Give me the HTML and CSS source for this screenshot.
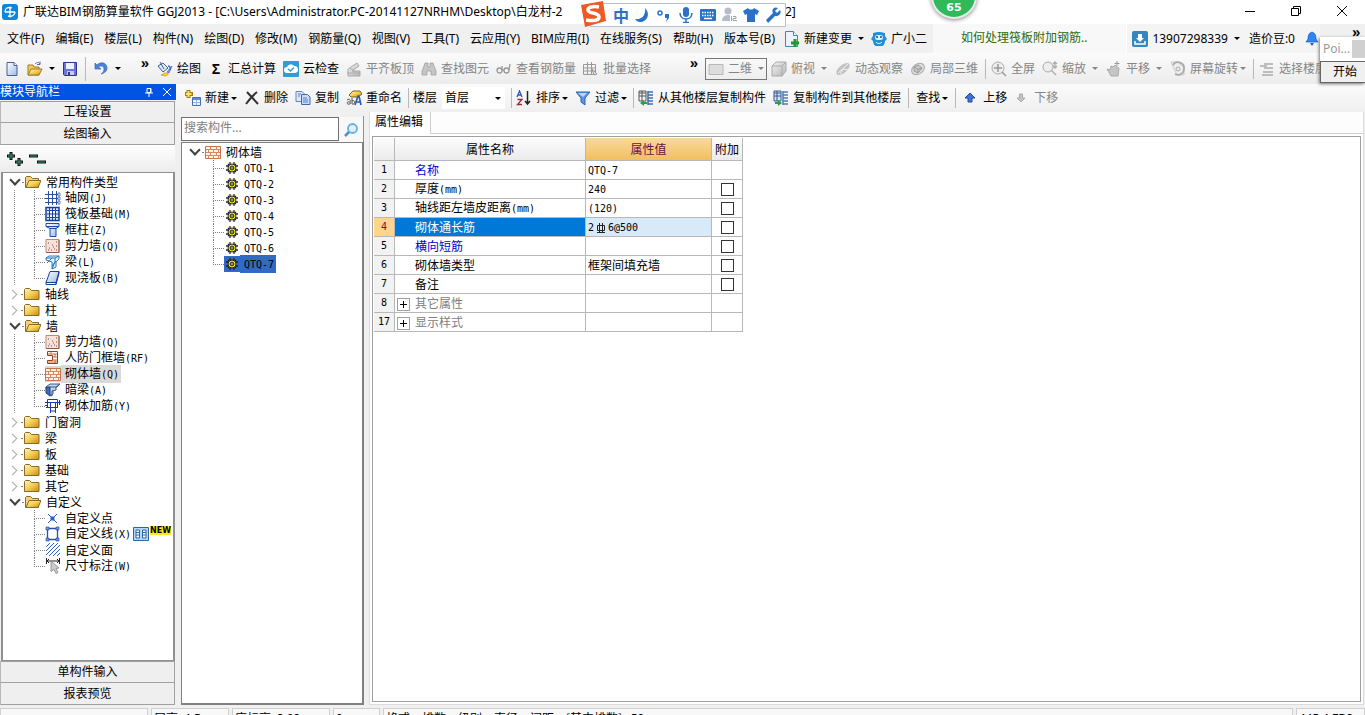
FILE: index.html
```html
<!DOCTYPE html>
<html lang="zh-CN">
<head>
<meta charset="utf-8">
<title>广联达BIM钢筋算量软件 GGJ2013</title>
<link rel="stylesheet" href="styles.css">
</head>
<body>
<svg class="defs" aria-hidden="true">
  <defs>
    <linearGradient id="gold" x1="0" y1="0" x2="1" y2="1"><stop offset="0" stop-color="#fff6b8"/><stop offset=".5" stop-color="#f5cd55"/><stop offset="1" stop-color="#c98a10"/></linearGradient>
    <linearGradient id="steel" x1="0" y1="0" x2="1" y2="1"><stop offset="0" stop-color="#fff"/><stop offset="1" stop-color="#9dbbe8"/></linearGradient>
    <linearGradient id="ash" x1="0" y1="0" x2="1" y2="1"><stop offset="0" stop-color="#f4f4f4"/><stop offset="1" stop-color="#b4b4b4"/></linearGradient>
  </defs>
  <symbol id="i-doc" viewBox="0 0 16 16"><path d="M3 1.500h7l3 3v10H3z" fill="url(#steel)" stroke="#4a5f8c"/><path d="M10 1.500v3h3" fill="#fff" stroke="#4a5f8c"/></symbol>
  <symbol id="i-open" viewBox="0 0 16 16"><path d="M1 14V4h5l1 2h5v8z" fill="#f0c860" stroke="#a07a20"/><path d="M1 14l3-6h11l-3 6z" fill="url(#gold)" stroke="#a07a20"/><path d="M8 3c2-2 4-2 5 0m0-2.500v3h-3" fill="none" stroke="#4d6ea8"/></symbol>
  <symbol id="i-save" viewBox="0 0 16 16"><path d="M1.500 1.500h13v13h-12l-1-1z" fill="#6b74d8" stroke="#30358c"/><path d="M4 2h8v6H4z" fill="#eef2ff"/><path d="M5 10h7v4H5z" fill="#c4c9f0"/><path d="M6 11h2v3H6z" fill="#30358c"/></symbol>
  <symbol id="i-undo" viewBox="0 0 16 16"><path d="M2 2v6h6L5.500 6C8 4 11 5 11 8c0 2-1 4-3 5 4-1 6-3 6-6 0-5-6-7-10-3z" fill="#4e84dc" stroke="#2e5cb0" stroke-width=".6"/></symbol>
  <symbol id="i-draw" viewBox="0 0 16 16"><path d="M1 5l5-3 5 5-5 4z" fill="#dfe9f8" stroke="#44608f"/><path d="M3 1l4 7" stroke="#44608f"/><path d="M15 5l-5 6 2 1z" fill="#7ca0df" stroke="#3b5aa0" stroke-width=".6"/><path d="M4 14c3-1 4-3 6-2 3 1 0 3-2 3z" fill="#ffd22e" stroke="#b48a10" stroke-width=".6"/><path d="M11 5c2 0 3 2 2 4" stroke="#3167c9" stroke-width="1.500" fill="none"/></symbol>
  <symbol id="i-cloud" viewBox="0 0 16 16"><rect width="16" height="16" rx="1" fill="#2d9fd6"/><path d="M4 12a3 3 0 010-6 4 4 0 017-1 3.500 3.500 0 011 7z" fill="#fff"/><path d="M5 8l2.500 2L11 6.500" fill="none" stroke="#2d9fd6" stroke-width="1.500"/></symbol>
  <symbol id="i-flat" viewBox="0 0 16 16"><path d="M2 8l9-6 2 3-7 5h8v5H2z" fill="url(#ash)" stroke="#aaa"/><path d="M1 12h13M4 7l5 4" stroke="#aaa"/></symbol>
  <symbol id="i-bino" viewBox="0 0 16 16"><path d="M4 2h3v4h2V2h3l1 3 2 5v4h-5v-4H6v4H1v-4l2-5z" fill="#c5c5c5" stroke="#999" stroke-width=".7"/></symbol>
  <symbol id="i-glass" viewBox="0 0 16 16"><g fill="none" stroke="#999" stroke-width="1.300"><circle cx="3.500" cy="9.500" r="2.500"/><circle cx="10.500" cy="9.500" r="2.500"/><path d="M6 9h2M6 8V5M13 9l1-6"/></g></symbol>
  <symbol id="i-batch" viewBox="0 0 16 16"><g fill="none" stroke="#999"><path d="M.500 3.500h12v10H.500zM.500 7h12M.500 10h12M4.500 1v13M8.500 1v13"/><path d="M9 8l5 5-3 1z" fill="#ddd"/></g></symbol>
  <symbol id="i-rect" viewBox="0 0 16 16"><path d="M1 3.500h14v10H1z" fill="#ddd" stroke="#b8b8b8"/></symbol>
  <symbol id="i-cube" viewBox="0 0 16 16"><path d="M1 5l4-4h10v9l-4 5H1z" fill="url(#ash)" stroke="#aaa"/><path d="M1 5h10v10M11 5l4-4" fill="none" stroke="#aaa"/></symbol>
  <symbol id="i-orbit" viewBox="0 0 16 16"><ellipse cx="8" cy="8" rx="4" ry="8" transform="rotate(50 8 8)" fill="#c2c2c2"/><path d="M3 12L13 3M5 13l3-5 5 1" stroke="#f3f3f3" fill="none"/></symbol>
  <symbol id="i-orbit2" viewBox="0 0 16 16"><ellipse cx="8" cy="8" rx="7" ry="5" transform="rotate(-35 8 8)" fill="#ddd" stroke="#aaa"/><path d="M4 6l4-2 4 3-4 5-4-2zM4 6l4 2 4-1M8 8v4" fill="#c8c8c8" stroke="#999"/></symbol>
  <symbol id="i-full" viewBox="0 0 16 16"><circle cx="7" cy="7" r="6" fill="#eee" stroke="#aaa"/><path d="M7 3v8M3 7h8M11 11l4 4" stroke="#999" stroke-width="1.500"/></symbol>
  <symbol id="i-zoom" viewBox="0 0 16 16"><circle cx="6" cy="6" r="5" fill="#eee" stroke="#aaa"/><path d="M9 9l5 5M13 1v6M11 3l2-2 2 2M11 5l2 2 2-2" stroke="#aaa" stroke-width="1.300" fill="none"/></symbol>
  <symbol id="i-pan" viewBox="0 0 16 16"><path d="M1 8l3 1 1-4 2 1 2-2 2 2 2 1-1 8H5z" fill="#c5c5c5" stroke="#aaa"/><path d="M11 0v5M8.500 2.500h5" stroke="#999"/></symbol>
  <symbol id="i-rotate" viewBox="0 0 16 16"><path d="M1 1h7l6 6v7H7z" fill="#eee" stroke="#ccc"/><path d="M3 4a6 6 0 0111 4 6 6 0 01-9 5" fill="none" stroke="#aaa" stroke-width="1.800"/><circle cx="8" cy="8" r="2" fill="none" stroke="#aaa"/></symbol>
  <symbol id="i-floors" viewBox="0 0 16 16"><path d="M5 3h9M5 7h9M4 11h10M3 14h11M1 5h7" stroke="#aaa" stroke-width="1.500"/></symbol>
  <symbol id="i-new" viewBox="0 0 16 16"><path d="M3.500 0v8M0 4h8" stroke="#a87a10" stroke-width="4"/><path d="M3.500 1v6M1 4h5.500" stroke="#ffe45c" stroke-width="2"/><path d="M7.500 7.500h8v8h-8z" fill="#eaf2ff" stroke="#4a6fae"/><path d="M8 8h7v2H8z" fill="#5b8ad8"/><path d="M8 12.500h7M11.500 10v5" stroke="#9db8e0"/></symbol>
  <symbol id="i-x" viewBox="0 0 16 16"><path d="M3 2l11 12M13 2C8 6 5 10 2 14" stroke="#333" stroke-width="2" fill="none"/></symbol>
  <symbol id="i-copy" viewBox="0 0 16 16"><path d="M1 1.500h6l2 2v8H1z" fill="#dbe7fb" stroke="#6286c0"/><path d="M6.500 4.500h6l2.500 2.500v7.500H6.500z" fill="#c8dbfa" stroke="#3f69b0"/><path d="M3 4h3M3 6h2M8 8h4M8 10h5M8 12h5" stroke="#5b80c0"/></symbol>
  <symbol id="i-ren" viewBox="0 0 16 16"><path d="M3 5l4-4h7l2 3-4 3H5z" fill="url(#gold)" stroke="#80611c"/><path d="M9 15l3-9h1l2 9M10 12h4" fill="none" stroke="#2f5eb8" stroke-width="1.700"/><path d="M1 10c3-2 4 0 3 4M4 12c-4-1-4 3 0 2M6 8v6c4 1 3-5 0-3" fill="none" stroke="#555"/></symbol>
  <symbol id="i-sort" viewBox="0 0 16 16"><path d="M1 7l2.500-6L6 7M2 5h3" fill="none" stroke="#2f58b8" stroke-width="1.300"/><path d="M1.500 9.500H6l-4.500 5H6" fill="none" stroke="#a12835" stroke-width="1.300"/><path d="M11.500 1v12M9 11l2.500 3L14 11" fill="none" stroke="#222" stroke-width="1.500"/></symbol>
  <symbol id="i-filter" viewBox="0 0 16 16"><path d="M1 2h14l-5 6v7l-4-3V8z" fill="#5a96e6" stroke="#2c62b0"/><path d="M3 3h9L8 7" fill="#b8d6ff"/></symbol>
  <symbol id="i-from" viewBox="0 0 16 16"><path d="M1 1h7v10H1zM1 3h7M1 6h7M4 1v10" fill="#f4f4f4" stroke="#555"/><path d="M10 2h5M10 5h5M10 8h5M10 11h5M10 14h5M10 1v14" stroke="#3a6fb8" stroke-width="1.500"/><path d="M2 13l4-3v2h3v2H6v2z" fill="#27a04a"/></symbol>
  <symbol id="i-to" viewBox="0 0 16 16"><path d="M1 1h7v10H1zM1 3h7M1 6h7M4 1v10" fill="#d7e3f6" stroke="#35588c"/><path d="M10 2h5M10 5h5M10 8h5M10 11h5M10 14h5M10 1v14" stroke="#4c7fb8" stroke-width="1.500"/><path d="M9 13l-4-3v2H2v2h3v2z" fill="#27a04a"/></symbol>
  <symbol id="i-up" viewBox="0 0 16 16"><path d="M7 3l5 5H9v4H5V8H2z" fill="#3f74e0" stroke="#2047a0"/></symbol>
  <symbol id="i-down" viewBox="0 0 16 16"><path d="M7 12l4-4H8.500V4h-3v4H3z" fill="#c4c4c4" stroke="#aaa"/></symbol>
  <symbol id="i-docplus" viewBox="0 0 16 16"><path d="M1.500 .500h8l4 4v11h-12z" fill="#eaf4ff" stroke="#4d7fb4"/><path d="M9.500 .500v4h4" fill="#fff" stroke="#4d7fb4"/><path d="M11 8v8M7 12h8" stroke="#1f9a2c" stroke-width="3"/></symbol>
  <symbol id="i-pet" viewBox="0 0 16 16"><path d="M2 2c2 0 2-1 6-1s4 1 6 1v3l2 3-2 2c0 3-2 5-3 5H5c-1 0-3-2-3-5L0 8l2-3z" fill="#2090dc"/><rect x="4" y="4" width="8" height="5" rx="2.500" fill="#d8f0ff"/><path d="M6 5v2M10 5v2" stroke="#124c80" stroke-width="1.500"/><path d="M5 11c2 2 4 2 6 0" stroke="#fff" fill="none"/></symbol>
  <symbol id="i-user" viewBox="0 0 16 16"><rect width="16" height="16" rx="2" fill="#3587bd"/><path d="M6 3h4v4h2l-4 4-4-4h2z" fill="#fff"/><path d="M3 10v3h10v-3" fill="none" stroke="#fff" stroke-width="1.500"/></symbol>
  <symbol id="i-bell" viewBox="0 0 16 16"><path d="M8 1c3 1 4 3 4 7l2 3H2l2-3c0-4 1-6 4-7z" fill="#2f86f2" stroke="#1c5dc0" stroke-width=".7"/><path d="M6 12h4l-2 3z" fill="#1c5dc0"/></symbol>
  <symbol id="i-folder" viewBox="0 0 16 16"><path d="M.500 13.500v-10l1-1h4l2 2h7.500v9z" fill="url(#gold)" stroke="#8b6a24"/></symbol>
  <symbol id="i-fopen" viewBox="0 0 16 16"><path d="M.500 13.500v-10l1-1h4l2 2h6v9z" fill="#f3d27a" stroke="#8b6a24"/><path d="M1 13.500l3-7h12l-3 7z" fill="url(#gold)" stroke="#8b6a24"/></symbol>
  <symbol id="i-grid" viewBox="0 0 16 16"><path d="M0 4.500h13M0 8.500h13M0 12.500h13M3.500 1v14M7.500 1v14M11.500 1v14" stroke="#2a4fa8"/><path d="M13 3h2v3h-2zM13 7h2v3h-2zM13 11h2v3h-2z" fill="none" stroke="#2a4fa8" stroke-width=".7"/></symbol>
  <symbol id="i-raft" viewBox="0 0 16 16"><path d="M1 1.500h13v13H1z" fill="#dbe8fb" stroke="#153f9c" stroke-width="1.500"/><path d="M4.500 4.500h6v7h-6z" fill="#fff" stroke="#153f9c"/><path d="M7.500 2v12M2 8h12M2 4.500h2M2 11.500h2M11 4.500h3M11 11.500h3M4.500 2v2M10.500 2v2M4.500 12v2M10.500 12v2" fill="none" stroke="#153f9c"/></symbol>
  <symbol id="i-col" viewBox="0 0 16 16"><path d="M1 1.500h13v3l-3 2v8H5v-8l-4-2z" fill="url(#steel)" stroke="#1d4b9e"/><path d="M1 4.500h13M5 6.500h6" stroke="#1d4b9e"/></symbol>
  <symbol id="i-shear" viewBox="0 0 16 16"><path d="M1 1.500h13v13H1z" fill="#f6e2d8" stroke="#c18a70"/><path d="M14 2v12.500H1" fill="none" stroke="#8a5a48"/><path d="M3 5h1M7 7h1M4 10h1M9 11h1M11 8h1M6 12h1M11 4h1M3 12h1M8 9h1M11 12h1" stroke="#844"/></symbol>
  <symbol id="i-beam" viewBox="0 0 16 16"><path d="M1 4l3-2h10v3l-3 3v5l-4 2V8L1 6z" fill="#e4f2fd" stroke="#2a78b8"/><path d="M1 4h9v4l-3 7M10 4l4-2M2 9l5-5M7 12l4-5" fill="none" stroke="#2a78b8"/></symbol>
  <symbol id="i-slab" viewBox="0 0 16 16"><path d="M5 1.500h9l-3 11H1z" fill="url(#steel)" stroke="#12409a"/><path d="M1 12.500v2h10l3-11v-2M11 12.500v2" fill="none" stroke="#12409a"/></symbol>
  <symbol id="i-door" viewBox="0 0 16 16"><path d="M2.500 1.500h10v12h-10v-3h5v-5h-5z" fill="#fff" stroke="#9b3d18"/><path d="M3 4h9M8 7h4M8 10h4M3 12h9M6 2v2M10 4v3M10 10v3" stroke="#c9683c"/></symbol>
  <symbol id="i-brick" viewBox="0 0 16 16"><path d="M.500 2.500h15v12H.500z" fill="#fff3e6" stroke="#c77448"/><path d="M1 5.500h14M1 8.500h14M1 11.500h14M5.500 3v2.500M11.500 3v2.500M8.500 5.500v3M3.500 5.500v3M13.500 5.500v3M5.500 8.500v3M11.500 8.500v3M8.500 11.500v3M3.500 11.500v3M13.500 11.500v3" stroke="#d5895c"/></symbol>
  <symbol id="i-hbeam" viewBox="0 0 16 16"><path d="M1 5l4-3h10l-4 3v3l-4 1v5l-5-3z" fill="#cbd7e8" stroke="#345a92"/><path d="M1 5h4v9l-4-3z" fill="#3f6cb0" stroke="#1d3f78"/><path d="M5 5h7l3-3M5 14l3-2V8" fill="none" stroke="#345a92"/></symbol>
  <symbol id="i-rebar" viewBox="0 0 16 16"><path d="M2.500 1.500h10v8h-10zM0 4.500h16M14.500 2v5M5.500 5v10M10.500 5v10M1 9.500h12M6 13h5M0 7.500h3" fill="none" stroke="#1638b0"/></symbol>
  <symbol id="i-pt" viewBox="0 0 16 16"><path d="M3 4l9 9M12 4l-9 9" stroke="#2d62b8"/><path d="M5.500 6.500h4v4h-4z" fill="#2d62b8"/></symbol>
  <symbol id="i-line" viewBox="0 0 16 16"><path d="M2.500 2.500h10v11h-10z" fill="none" stroke="#2d4fae" stroke-width="1.300"/><path d="M1 1h3v3H1zM11 1h3v3h-3zM1 12h3v3H1zM11 12h3v3h-3z" fill="#6b9bea" stroke="#1d3f98" stroke-width=".6"/></symbol>
  <symbol id="i-area" viewBox="0 0 16 16"><path d="M1 5l4-4M1 9l8-8M1 13L13 1M4 14L15 3M8 14l7-7M12 14l3-3" stroke="#2d5fb4"/></symbol>
  <symbol id="i-dim" viewBox="0 0 16 16"><path d="M1.500 0v6M14.500 0v6M2 3h12M4 1L2 3l2 2M12 1l2 2-2 2" stroke="#222" fill="none"/><path d="M6 3l8 7-3 .500 2 4-2 1-2-4-3 2z" fill="#ccc" stroke="#888" stroke-width=".8"/></symbol>
  <symbol id="i-book" viewBox="0 0 16 16"><path d="M.500 1.500h15v13H.500z" fill="#b6d8f6" stroke="#2a66a8"/><path d="M3 4h3.500v8H3zM9.500 4H13v8H9.500zM3 6.500h3.500M3 9h3.500M9.500 6.500H13M9.500 9H13" fill="#fff" stroke="#2a66a8"/></symbol>
  <symbol id="i-gear" viewBox="0 0 12 12"><path d="M4 0v12M8 0v12M0 4h12M0 8h12M2 2l8 8M10 2l-8 8" stroke="#222" stroke-width="1.300"/><circle cx="6" cy="6" r="4" fill="#ffee22" stroke="#222"/><path d="M4.500 4.500h3v3h-3z" fill="none" stroke="#333"/><path d="M6 2v8M2 6h8" stroke="#555" stroke-width=".6"/></symbol>
  <symbol id="i-plus2" viewBox="0 0 18 16"><path d="M5 1v8M1 5h8M13 7v8M9 11h8" stroke="#111" stroke-width="3"/><path d="M5 2v6M2 5h6M13 8v6M10 11h6" stroke="#35a07c"/></symbol>
  <symbol id="i-minus2" viewBox="0 0 18 16"><path d="M0 5h9M8 11h9" stroke="#111" stroke-width="3"/><path d="M1 5h7M9 11h7" stroke="#35a07c"/></symbol>
  <symbol id="i-find" viewBox="0 0 16 16"><circle cx="9.500" cy="6.500" r="4.500" fill="#dff0fc" stroke="#6aaede" stroke-width="1.800"/><path d="M6 10l-4 4" stroke="#4b90cc" stroke-width="2.500"/></symbol>
</svg>

<div class="app">
  <header class="titlebar">
    <svg class="logo" viewBox="0 0 16 16"><rect width="16" height="16" rx="3" fill="#0e86dc"/><path d="M8 2.500v11M3 8h10M10 4a5 4.500 0 00-5 0c-2 1-2 3-2 4M6 12c4 1 7-1 7-4" fill="none" stroke="#fff" stroke-width="1.300"/></svg>
    <h1 class="caption">广联达BIM钢筋算量软件 GGJ2013 - [C:\Users\Administrator.PC-20141127NRHM\Desktop\白龙村-2</h1>
    <span class="caption-end">2]</span>
    <div class="winbtns">
      <button aria-label="最小化"><svg viewBox="0 0 12 12"><path d="M1 6.500h10" stroke="#000"/></svg></button>
      <button aria-label="还原"><svg viewBox="0 0 12 12"><path d="M1.500 3.500h7v7h-7zM3.500 3.500v-2h7v7h-2" fill="none" stroke="#000"/></svg></button>
      <button aria-label="关闭"><svg viewBox="0 0 12 12"><path d="M1 1l10 10M11 1L1 11" stroke="#000"/></svg></button>
    </div>
  </header>

  <div class="menubar">
    <nav class="menus">
      <button>文件(F)</button><button>编辑(E)</button><button>楼层(L)</button><button>构件(N)</button><button>绘图(D)</button><button>修改(M)</button><button>钢筋量(Q)</button><button>视图(V)</button><button>工具(T)</button><button>云应用(Y)</button><button>BIM应用(I)</button><button>在线服务(S)</button><button>帮助(H)</button><button>版本号(B)</button>
    </nav>
    <button class="tool"><svg><use href="#i-docplus"/></svg>新建变更<i class="caret wide"></i></button>
    <button class="tool"><svg><use href="#i-pet"/></svg>广小二</button>
    <div class="tip"><a href="#tip">如何处理筏板附加钢筋..</a></div>
    <div class="account">
      <button class="tool phone"><svg><use href="#i-user"/></svg>13907298339<i class="caret"></i></button>
      <span>造价豆:0</span>
      <button class="tool" aria-label="通知"><svg><use href="#i-bell"/></svg></button>
    </div>
    <span class="more top">»</span>
  </div>

  <div class="toolbar">
    <div class="strip files">
      <button class="tool" aria-label="新建"><svg><use href="#i-doc"/></svg></button>
      <button class="tool" aria-label="打开"><svg><use href="#i-open"/></svg><i class="caret wide"></i></button>
      <button class="tool" aria-label="保存"><svg><use href="#i-save"/></svg></button>
      <i class="sep"></i>
      <button class="tool" aria-label="撤销"><svg><use href="#i-undo"/></svg><i class="caret wide"></i></button>
      <span class="more">»</span>
    </div>
    <div class="strip work">
      <button class="tool"><svg><use href="#i-draw"/></svg>绘图</button>
      <button class="tool"><b class="sigma">Σ</b>汇总计算</button>
      <button class="tool"><svg><use href="#i-cloud"/></svg>云检查</button>
      <button class="tool off"><svg><use href="#i-flat"/></svg>平齐板顶</button>
      <button class="tool off"><svg><use href="#i-bino"/></svg>查找图元</button>
      <button class="tool off"><svg><use href="#i-glass"/></svg>查看钢筋量</button>
      <button class="tool off"><svg><use href="#i-batch"/></svg>批量选择</button>
      <span class="more">»</span>
    </div>
    <div class="strip view">
      <button class="tool off boxed"><svg><use href="#i-rect"/></svg>二维<i class="caret wide"></i></button>
      <button class="tool off"><svg><use href="#i-cube"/></svg>俯视<i class="caret wide"></i></button>
      <button class="tool off"><svg><use href="#i-orbit"/></svg>动态观察</button>
      <button class="tool off"><svg><use href="#i-orbit2"/></svg>局部三维</button>
      <i class="sep"></i>
      <button class="tool off"><svg><use href="#i-full"/></svg>全屏</button>
      <button class="tool off"><svg><use href="#i-zoom"/></svg>缩放<i class="caret wide"></i></button>
      <button class="tool off"><svg><use href="#i-pan"/></svg>平移<i class="caret wide"></i></button>
      <button class="tool off"><svg><use href="#i-rotate"/></svg>屏幕旋转<i class="caret"></i></button>
      <i class="sep"></i>
      <button class="tool off"><svg><use href="#i-floors"/></svg>选择楼层</button>
    </div>
  </div>

  <div class="main">
    <aside class="dock">
      <div class="dock-title"><span>模块导航栏</span>
        <button aria-label="固定"><svg viewBox="0 0 10 10"><path d="M3 1.500h4v4H3zM6.500 1v5M1 6h8M5 6v4" fill="none" stroke="#fff"/></svg></button>
        <button aria-label="关闭"><svg viewBox="0 0 10 10"><path d="M1 1l8 8M9 1L1 9" stroke="#fff"/></svg></button>
      </div>
      <button class="bar first">工程设置</button>
      <button class="bar">绘图输入</button>
      <div class="dock-tools">
        <button aria-label="全部展开"><svg><use href="#i-plus2"/></svg></button>
        <button aria-label="全部折叠"><svg><use href="#i-minus2"/></svg></button>
      </div>
      <ul class="tree nav-tree">
        <li><div class="node open"><svg><use href="#i-fopen"/></svg>常用构件类型</div>
          <ul class="through">
            <li><svg><use href="#i-grid"/></svg><span>轴网<s>(J)</s></span></li>
            <li><svg><use href="#i-raft"/></svg><span>筏板基础<s>(M)</s></span></li>
            <li><svg><use href="#i-col"/></svg><span>框柱<s>(Z)</s></span></li>
            <li><svg><use href="#i-shear"/></svg><span>剪力墙<s>(Q)</s></span></li>
            <li><svg><use href="#i-beam"/></svg><span>梁<s>(L)</s></span></li>
            <li><svg><use href="#i-slab"/></svg><span>现浇板<s>(B)</s></span></li>
          </ul></li>
        <li><div class="node"><svg><use href="#i-folder"/></svg>轴线</div></li>
        <li><div class="node"><svg><use href="#i-folder"/></svg>柱</div></li>
        <li><div class="node open"><svg><use href="#i-fopen"/></svg>墙</div>
          <ul class="through">
            <li><svg><use href="#i-shear"/></svg><span>剪力墙<s>(Q)</s></span></li>
            <li><svg><use href="#i-door"/></svg><span>人防门框墙<s>(RF)</s></span></li>
            <li class="current"><svg><use href="#i-brick"/></svg><span>砌体墙<s>(Q)</s></span></li>
            <li><svg><use href="#i-hbeam"/></svg><span>暗梁<s>(A)</s></span></li>
            <li><svg><use href="#i-rebar"/></svg><span>砌体加筋<s>(Y)</s></span></li>
          </ul></li>
        <li><div class="node"><svg><use href="#i-folder"/></svg>门窗洞</div></li>
        <li><div class="node"><svg><use href="#i-folder"/></svg>梁</div></li>
        <li><div class="node"><svg><use href="#i-folder"/></svg>板</div></li>
        <li><div class="node"><svg><use href="#i-folder"/></svg>基础</div></li>
        <li><div class="node"><svg><use href="#i-folder"/></svg>其它</div></li>
        <li><div class="node open"><svg><use href="#i-fopen"/></svg>自定义</div>
          <ul>
            <li><svg><use href="#i-pt"/></svg><span>自定义点</span></li>
            <li><svg><use href="#i-line"/></svg><span>自定义线<s>(X)</s></span><svg class="book"><use href="#i-book"/></svg><em>NEW</em></li>
            <li><svg><use href="#i-area"/></svg><span>自定义面</span></li>
            <li><svg><use href="#i-dim"/></svg><span>尺寸标注<s>(W)</s></span></li>
          </ul></li>
      </ul>
      <button class="bar first">单构件输入</button>
      <button class="bar">报表预览</button>
    </aside>

    <section class="work-area">
      <div class="strip edit">
        <button class="tool"><svg><use href="#i-new"/></svg>新建<i class="caret"></i></button>
        <button class="tool"><svg><use href="#i-x"/></svg>删除</button>
        <button class="tool"><svg><use href="#i-copy"/></svg>复制</button>
        <button class="tool"><svg><use href="#i-ren"/></svg>重命名</button>
        <i class="sep tight"></i>
        <label for="floor">楼层</label>
        <span class="pick"><select id="floor"><option>首层</option></select><i class="caret"></i></span>
        <i class="sep tight"></i>
        <button class="tool"><svg><use href="#i-sort"/></svg>排序<i class="caret"></i></button>
        <button class="tool"><svg><use href="#i-filter"/></svg>过滤<i class="caret"></i></button>
        <i class="sep tight"></i>
        <button class="tool"><svg><use href="#i-from"/></svg>从其他楼层复制构件</button>
        <button class="tool"><svg><use href="#i-to"/></svg>复制构件到其他楼层</button>
        <i class="sep"></i>
        <button class="tool">查找<i class="caret"></i></button>
        <i class="sep"></i>
        <button class="tool"><svg><use href="#i-up"/></svg>上移</button>
        <button class="tool off"><svg><use href="#i-down"/></svg>下移</button>
      </div>
      <div class="panes">
        <div class="members">
          <div class="search"><input type="text" placeholder="搜索构件..." aria-label="搜索构件"><button aria-label="搜索"><svg><use href="#i-find"/></svg></button></div>
          <ul class="tree member-tree">
            <li><div class="node open"><svg><use href="#i-brick"/></svg>砌体墙</div>
              <ul>
                <li><svg><use href="#i-gear"/></svg><span><s>QTQ-1</s></span></li>
                <li><svg><use href="#i-gear"/></svg><span><s>QTQ-2</s></span></li>
                <li><svg><use href="#i-gear"/></svg><span><s>QTQ-3</s></span></li>
                <li><svg><use href="#i-gear"/></svg><span><s>QTQ-4</s></span></li>
                <li><svg><use href="#i-gear"/></svg><span><s>QTQ-5</s></span></li>
                <li><svg><use href="#i-gear"/></svg><span><s>QTQ-6</s></span></li>
                <li class="picked"><svg><use href="#i-gear"/></svg><span><s>QTQ-7</s></span></li>
              </ul></li>
          </ul>
        </div>
        <div class="props">
          <div class="tabs"><button class="tab">属性编辑</button></div>
          <div class="sheet">
            <table>
              <colgroup><col class="c-no"><col class="c-name"><col class="c-val"><col class="c-add"></colgroup>
              <thead><tr><th></th><th>属性名称</th><th class="hot">属性值</th><th>附加</th></tr></thead>
              <tbody>
                <tr><th>1</th><td class="key blue">名称</td><td><s>QTQ-7</s></td><td></td></tr>
                <tr><th>2</th><td class="key">厚度<s>(mm)</s></td><td><s>240</s></td><td><input type="checkbox" aria-label="附加 厚度"></td></tr>
                <tr><th>3</th><td class="key">轴线距左墙皮距离<s>(mm)</s></td><td><s>(120)</s></td><td><input type="checkbox" aria-label="附加 轴线距左墙皮距离"></td></tr>
                <tr class="sel"><th>4</th><td class="key">砌体通长筋</td><td><s>2</s><svg class="rebar" viewBox="0 0 12 12"><path d="M2.500 3.500h7v5h-7zM4.500 1v10M7.500 1v10M2 10.500h8" fill="none" stroke="#222"/></svg><s>6@500</s></td><td><input type="checkbox" aria-label="附加 砌体通长筋"></td></tr>
                <tr><th>5</th><td class="key blue">横向短筋</td><td></td><td><input type="checkbox" aria-label="附加 横向短筋"></td></tr>
                <tr><th>6</th><td class="key">砌体墙类型</td><td>框架间填充墙</td><td><input type="checkbox" aria-label="附加 砌体墙类型"></td></tr>
                <tr><th>7</th><td class="key">备注</td><td></td><td><input type="checkbox" aria-label="附加 备注"></td></tr>
                <tr><th>8</th><td class="group"><button aria-label="展开 其它属性"></button>其它属性</td><td></td><td></td></tr>
                <tr><th>17</th><td class="group"><button aria-label="展开 显示样式"></button>显示样式</td><td></td><td></td></tr>
              </tbody>
            </table>
          </div>
        </div>
      </div>
    </section>
  </div>

  <footer class="status">
    <span class="s-lg"></span><span class="s-sm">层高: 4.5m</span><span class="s-md">底标高: 3.92m</span><span class="s-xs">0</span><span class="s-fill">格式：排数·级别·直径·间距·[其中排数] ; 50</span><span class="s-end">445.4 FPS</span>
  </footer>
</div>

<div class="ime">
  <svg class="sogou" viewBox="0 0 28 28"><path d="M2 5L24 1l3 20-21 6z" fill="#ee5a24"/><path d="M20 7C14 6 9 7 9 10c0 4 11 2 11 7 0 4-7 4-13 3" fill="none" stroke="#fff" stroke-width="3.500"/></svg>
  <span class="zh">中</span>
  <svg viewBox="0 0 16 16"><path d="M10 1c6 6 2 14-5 14-2 0-4-1-5-3 7 1 11-4 10-11z" fill="#2a72c8"/></svg>
  <svg viewBox="0 0 16 16"><circle cx="4" cy="6" r="2" fill="none" stroke="#2a72c8" stroke-width="1.500"/><path d="M9 7h4v4l-3 4 1-4H9z" fill="#2a72c8"/></svg>
  <svg viewBox="0 0 16 16"><rect x="5" y="0" width="6" height="10" rx="3" fill="#2a72c8"/><path d="M2 6c0 8 12 8 12 0M8 12v4M5 15.500h6" fill="none" stroke="#2a72c8" stroke-width="1.500"/></svg>
  <svg viewBox="0 0 16 16"><rect y="2" width="16" height="12" rx="1" fill="#2a72c8"/><path d="M2 5.500h12M2 8.500h12" stroke="#fff" stroke-width="1.500" stroke-dasharray="1.500 1"/><path d="M4 11.500h8" stroke="#fff" stroke-width="1.500"/></svg>
  <svg viewBox="0 0 16 16"><circle cx="6" cy="4" r="3.500" fill="#b5bcc8"/><path d="M0 14c0-8 12-8 12 0z" fill="#b5bcc8"/><path d="M8 8h8v7H8z" fill="#fff"/><path d="M9.500 9v5M11 9.500h3v2h-3v2h4" fill="none" stroke="#9aa3b4"/></svg>
  <svg viewBox="0 0 16 16"><path d="M5 1c1 2 5 2 6 0l5 3-2 4-2-1v8H4V7L2 8 0 4z" fill="#2a72c8"/></svg>
  <svg viewBox="0 0 16 16"><path d="M15 3l-3 3-2-2 3-3c-4-2-7 2-5 5l-7 7 2 3 7-7c4 1 7-3 5-6z" fill="#2a72c8"/></svg>
</div>
<div class="ball">65</div>
<div class="mini"><div class="mini-title"><span>Poi...</span><i></i></div><button>开始</button></div>
</body>
</html>
```
FILE: styles.css
```css
* { box-sizing: border-box; }
html, body { height: 100%; }
body {
  margin: 0;
  overflow: hidden;
  position: relative;
  background: #f0f0f0;
  color: #000;
  font: 12px/16px "Noto Sans", "Noto Sans CJK SC", sans-serif;
  white-space: nowrap;
}
button, input, select { font: inherit; color: inherit; }
button { border: 0; padding: 0; background: none; }
ul { list-style: none; margin: 0; padding: 0; }
s { text-decoration: none; font: 10px/16px "DejaVu Sans Mono", monospace; }
.defs { position: absolute; width: 0; height: 0; }

.app { display: flex; flex-direction: column; height: calc(100vh + 15px); }

/* title bar */
.titlebar { display: flex; align-items: center; height: 24px; background: #fff; padding-left: 2px; flex: none; }
.logo { width: 16px; height: 16px; margin-right: 5px; }
.caption { margin: 0; font-size: 12px; font-weight: 400; width: 564px; overflow: hidden; }
.caption-end { margin-left: 198px; }
.winbtns { margin-left: auto; display: flex; align-self: flex-start; }
.winbtns button { width: 46px; height: 20px; }
.winbtns svg { width: 12px; height: 12px; vertical-align: middle; }

/* menu bar */
.menubar { display: flex; align-items: center; height: 29px; background: #f0f0f0; padding-left: 7px; flex: none; }
.menus { display: flex; gap: 11px; margin-right: 9px; }
.tool { display: flex; align-items: center; gap: 4px; flex: none; }
.tool svg { width: 16px; height: 16px; flex: none; }
.menubar > .tool { margin-right: 6px; }
.tip { flex: 1; align-self: stretch; padding: 6px 0 0 28px; background: #f8f8f8; }
.tip a { color: #2d6a10; text-decoration: none; }
.account { display: flex; align-items: center; gap: 9px; align-self: stretch; padding-left: 5px; background: #f4f4f4; border-left: 1px solid #fff; }
.caret { width: 0; height: 0; border: 3px solid transparent; border-top-color: currentColor; border-bottom: 0; margin-left: -2px; }
.caret.wide { margin: 0 1px 0 2px; }
.phone .caret { margin: 0 0 0 2px; }
.more { font: bold 15px/16px "Liberation Sans", sans-serif; }
.more.top { align-self: flex-start; width: 45px; padding-left: 32px; }

/* toolbars */
.toolbar { display: flex; height: 31px; flex: none; padding-left: 4px; background: linear-gradient(#fbfbfb, #ececec); overflow: hidden; }
.strip { display: flex; align-items: center; gap: 7px; }
.off { color: #858585; }
.sep { width: 1px; height: 20px; background: #b8b8b8; flex: none; }
.files { width: 153px; }
.files .caret.wide { margin-right: 0; }
.files .more { margin: -12px 0 0 auto; padding-right: 8px; }
.files .sep { height: 24px; }
.work { width: 548px; }
.work .more { margin: -12px 0 0 auto; padding-right: 7px; }
.sigma { width: 16px; font: bold 14px/16px "Liberation Sans", sans-serif; text-align: center; }
.boxed { border: 1px solid #777; height: 22px; width: 62px; padding-left: 2px; margin-right: -3px; }
.view .sep { margin-right: -2px; }

.main { display: flex; flex: 1; min-height: 0; }

/* navigation dock */
.dock { display: flex; flex-direction: column; width: 176px; flex: none; padding-bottom: 3px; }
.dock-title { display: flex; align-items: center; gap: 8px; height: 16px; margin-bottom: 1px; padding-right: 4px; background: #0054e3; color: #fff; line-height: 14px; }
.dock-title span { margin-right: auto; }
.dock-title button { width: 10px; height: 16px; line-height: 0; }
.dock-title svg { width: 10px; height: 10px; }
.bar { height: 22px; margin-right: 1px; border: 1px solid #a0a0a0; border-top: 0; border-left-color: #b8b8b8; background: #efefef; line-height: 20px; flex: none; }
.bar.first { border-top: 1px solid #a0a0a0; }
.dock-tools { display: flex; align-items: center; gap: 5px; height: 27px; flex: none; padding-left: 6px; margin-right: 1px; background: linear-gradient(#fefefe, #ececec); }
.dock-tools svg { display: block; width: 18px; height: 16px; }

/* trees */
.tree { background: #fff; border: 1px solid #909090; border-left-width: 2px; overflow: hidden; font-family: "Noto Sans CJK SC", sans-serif; }
.tree svg { width: 16px; height: 16px; flex: none; }
.nav-tree { flex: 1; margin: 0 1px; padding: 1px 0 0 4px; border-right-width: 2px; }
.node { display: flex; align-items: center; gap: 5px; height: 16px; }
.node::before { content: ""; order: -2; width: 6px; height: 6px; margin: 0 8px 0 2px; border: solid #aaa; border-width: 1px 1px 0 0; outline: 0; transform: rotate(45deg); flex: none; }
.node.open::before { border-color: #404040; border-width: 2px 2px 0 0; transform: rotate(135deg); margin: -4px 6px 0 4px; }
.node::after { content: ""; order: -1; width: 4px; margin: 0 -6px 0 -8px; border-top: 1px dotted #808080; }
.tree ul { padding-left: 28px; }
.tree ul.through { background: repeating-linear-gradient(#888 0 1px, #fff 1px 2px) 7px 0 / 1px 100% no-repeat; }
.tree ul li { display: flex; align-items: center; height: 16px; position: relative; padding-left: 10px; }
.tree ul li::before { content: ""; position: absolute; left: -1px; top: 0; width: 10px; height: 8px; border-left: 1px dotted #808080; border-bottom: 1px dotted #808080; }
.tree ul li:not(:last-child)::after { content: ""; position: absolute; left: -1px; top: 8px; height: 8px; border-left: 1px dotted #808080; }
.tree ul li span { padding: 0 2px 0 4px; }
.tree .current span, .tree .current svg { background: #d9d9d9; }
.tree em { background: #ffe820; align-self: flex-start; font: bold 8px/9px "DejaVu Sans", sans-serif; height: 9px; margin-left: 1px; }

/* work area */
.work-area { display: flex; flex-direction: column; flex: 1; min-width: 0; }
.edit { height: 28px; flex: none; padding-left: 9px; background: linear-gradient(#fbfbfb, #efefef); }
.sep.tight { margin: 0 -3px 0 -1px; }
.pick { display: flex; align-items: center; width: 63px; margin-left: -2px; background: #fff; }
.pick select { appearance: none; flex: 1; min-width: 0; height: 22px; border: 0; padding: 0 3px; background: #fff; }
.pick .caret { margin-right: 4px; }
.panes { display: flex; flex: 1; min-height: 0; }
.members { display: flex; flex-direction: column; width: 188px; padding: 4px 0 3px 5px; flex: none; }
.search { display: flex; height: 26px; padding-top: 1px; width: 183px; border-right: 1px solid #909090; }
.search input { width: 158px; height: 24px; padding: 0 2px 4px; border: 1px solid #707070; background: #fff; }
.search button { flex: 1; background: #f8f8f8; line-height: 0; }
.search input::placeholder { color: #808080; opacity: 1; }
.search svg { width: 16px; height: 16px; }
.member-tree { flex: 1; width: 183px; border: 1px solid #808080; border-right-width: 2px; border-bottom-width: 2px; padding: 1px 0 0 5px; }
.member-tree ul { padding-left: 27px; }
.member-tree ul svg { width: 12px; height: 12px; margin: 0 2px; }
.member-tree ul span { padding: 0 4px 0 8px; }
.picked > * { background: #316ac5; }
.picked svg { box-shadow: 0 0 0 2px #316ac5; }

.props { display: flex; flex-direction: column; flex: 1; min-width: 0; margin: 0 1px 3px 5px; background: #fff; border: 1px solid #dcdcdc; border-top: 0; }
.tabs { display: flex; height: 22px; flex: none; }
.tabs::after { content: ""; flex: 1; border-bottom: 1px solid #d0d0d0; border-left: 1px solid #d0d0d0; background: #fdfdfd; }
.tab { padding: 0 7px 2px 5px; }
.sheet { flex: 1; margin: 2px; border: 1px solid #a0a0a0; padding: 1px; }
table { border-collapse: separate; border-spacing: 0; table-layout: fixed; width: 369px; font-family: "Noto Sans CJK SC", sans-serif; }
.c-no { width: 21px; } .c-name { width: 191px; } .c-val { width: 126px; } .c-add { width: 31px; }
th, td { height: 19px; padding: 0 2px; border: solid #b8b8b8; border-width: 0 1px 1px 0; text-align: left; font-weight: 400; line-height: 16px; }
thead th { height: 23px; padding: 0; text-align: center; background: linear-gradient(#fcfcfc, #ebebeb); }
thead .hot { background: linear-gradient(#f9d99b, #f2bf60); color: #6b1040; }
tbody th { padding: 0; text-align: center; font: 10px/16px "DejaVu Sans Mono", monospace; background: #f2f2f2; }
td:last-child { text-align: center; }
.key { padding-left: 20px; }
.blue { color: #0000d8; }
.sel th { background: #ffd58c; color: #7a1030; }
.sel .key { background: #0078d7; color: #fff; }
.sel td:nth-child(3) { background: #d8e9f8; }
.rebar { width: 12px; height: 12px; margin: 0 1px; vertical-align: middle; }
td input { appearance: none; display: block; width: 13px; height: 13px; margin: 0 auto; border: 1px solid #333; background: #fff; }
.group { color: #808080; }
.group button { width: 13px; height: 13px; margin-right: 5px; border: 1px solid #a0a0a0; vertical-align: -2px; background: linear-gradient(#000, #000) center / 7px 1px no-repeat, linear-gradient(#000, #000) center / 1px 7px no-repeat; }

/* status bar */
.status { display: flex; gap: 3px; height: 22px; flex: none; font-family: "Noto Sans CJK SC", sans-serif; }
.status span { border: 1px solid #d0d0d0; background: #f8f8f8; padding: 1px 2px; overflow: hidden; }
.s-lg { width: 148px; } .s-sm { width: 78px; } .s-md { width: 98px; } .s-xs { width: 47px; } .s-fill { flex: 1; } .s-end { width: 69px; }

/* floating windows over the application */
.ime { position: absolute; left: 590px; top: 3px; height: 24px; width: 196px; padding: 0 4px 0 22px; display: flex; align-items: center; justify-content: space-between; background: #fff; border: 1px solid #b8c4d4; }
.ime svg { width: 16px; height: 16px; }
.ime .sogou { position: absolute; left: -12px; top: -4px; width: 28px; height: 28px; }
.zh { color: #2a72c8; font: bold 16px/20px "Noto Sans CJK SC", sans-serif; }
.ball { position: absolute; left: 931px; top: -27px; width: 46px; height: 46px; border-radius: 50%; border: 2px solid #e4f0e6; background: #2fb95a; color: #fff; font: bold 11px/16px "DejaVu Sans", sans-serif; padding-top: 25px; text-align: center; box-shadow: 0 1px 4px #888; }
.mini { position: absolute; right: 0; top: 37px; width: 45px; height: 46px; background: #fff; box-shadow: -1px 1px 3px #777; }
.mini-title { display: flex; align-items: center; height: 24px; padding-left: 3px; color: #999; gap: 2px; }
.mini-title i { flex: 1; height: 18px; background: #d0d0d0; }
.mini button { width: 45px; height: 22px; border: solid #666; border-width: 1px 0 1px 1px; background: #f0f0f0; padding-left: 4px; }
```
